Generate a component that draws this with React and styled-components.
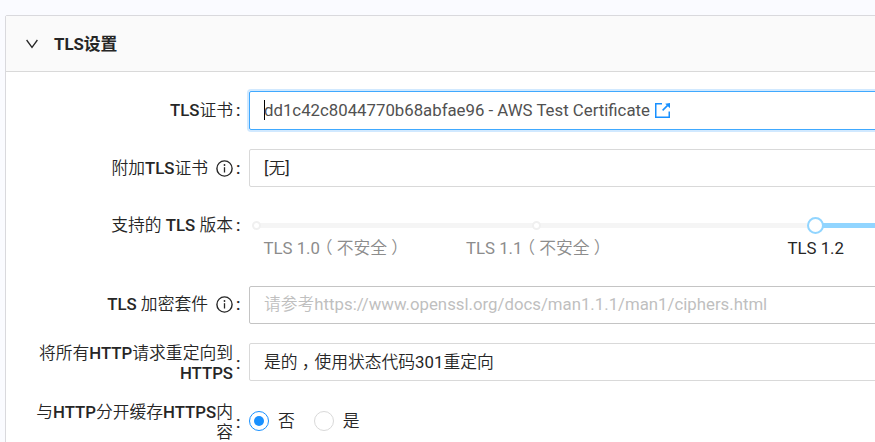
import React from "react";
import styled, { createGlobalStyle, css } from "styled-components";

const GlobalStyle = createGlobalStyle`
  * { box-sizing: border-box; }
  html, body { margin: 0; height: 100%; overflow: hidden; }
  body {
    background: #fafbff;
    color: #262626;
    font-family: Roboto, "Noto Sans CJK SC", sans-serif;
    font-size: 16.8px;
    line-height: 20px;
  }
`;

const Page = styled.main`
  width: 875px;
  height: 442px;
  padding: 15px 0 0 5px;
  overflow: hidden;
`;

const Panel = styled.section`
  width: 1100px;
  height: 600px;
  border: 1px solid #d9d9dd;
  border-radius: 2px;
  background: #fff;
`;

const PanelHeader = styled.header`
  display: flex;
  align-items: center;
  gap: 15px;
  height: 56px;
  padding-left: 19px;
  border-bottom: 1px solid #d9d9d9;
  background: #fafafa;
`;

const PanelTitle = styled.h2`
  margin: 0;
  font-size: 16.8px;
  font-weight: 700;
  line-height: 20px;
`;

const Form = styled.div`
  padding-top: 19px;
`;

const Row = styled.div`
  display: flex;
  align-items: flex-start;
  height: ${(p) => p.$pitch}px;
`;

const Label = styled.label`
  display: flex;
  align-items: center;
  justify-content: flex-end;
  flex: none;
  width: 243px;
  height: ${(p) => p.$height || 38}px;
  padding-right: 8px;
  font-weight: 500;
`;

const LabelText = styled.span`
  width: 202px;
  margin-right: 1px;
  text-align: right;
  display: ${(p) => (p.$inline ? "inline-flex" : "block")};
  align-items: center;
  justify-content: flex-end;
  gap: 8px;
`;

const Cjk = styled.span`
  font-weight: 350;
`;

const Colon = styled.span`
  width: 7px;
  padding-left: 2px;
  font-weight: 500;
`;

const Field = styled.div`
  display: flex;
  align-items: center;
  flex: 1;
  height: 38px;
  padding: 0 0 ${(p) => (p.$raised ? 2 : 0)}px 14px;
  border: 1px solid ${(p) => (p.$strong ? "#c4c4c4" : "#d9d9d9")};
  border-radius: 2px;
  color: ${(p) => (p.$placeholder ? "#bfbfbf" : "#262626")};
  ${(p) =>
    p.$focused &&
    css`
      height: 39px;
      border-color: #40a9ff;
      box-shadow: 0 0 0 2px rgba(24, 144, 255, 0.2);
      color: #515151;
    `}
`;

const Caret = styled.span`
  width: 1px;
  height: 20px;
  margin-right: -1px;
  background: #000;
`;

const Punct = styled.span`
  display: inline-block;
  width: 16.8px;
  text-align: center;
  font-family: "Noto Sans CJK SC", sans-serif;
  font-feature-settings: "halt" 1;
  line-height: 1;
`;

const Slider = styled.div`
  position: relative;
  flex: 1;
  height: 60px;
`;

const Rail = styled.div`
  height: 5px;
  margin: 17px 0 0 8px;
  background: #f5f5f5;
`;

const Track = styled.div`
  height: 5px;
  margin-left: 558px;
  background: #91d5ff;
`;

const Stop = styled.span`
  position: absolute;
  top: ${(p) => (p.$handle ? 11 : 15)}px;
  left: ${(p) => p.$x}px;
  width: ${(p) => (p.$handle ? 17 : 9)}px;
  height: ${(p) => (p.$handle ? 17 : 9)}px;
  border: 2px solid ${(p) => (p.$handle ? "#91d5ff" : "#f0f0f0")};
  border-radius: 50%;
  background: #fff;
`;

const Mark = styled.span`
  position: absolute;
  top: 32px;
  left: ${(p) => p.$x}px;
  white-space: nowrap;
  color: ${(p) => (p.$active ? "#262626" : "#8c8c8c")};
`;

const RadioGroup = styled.div`
  display: flex;
  align-items: center;
  height: 38px;
`;

const RadioOption = styled.label`
  display: flex;
  align-items: center;
  gap: 9px;
  margin-right: 19px;
`;

const RadioDot = styled.span`
  display: grid;
  place-items: center;
  width: 20px;
  height: 20px;
  border: 1px solid ${(p) => (p.$checked ? "#1890ff" : "#d9d9d9")};
  border-radius: 50%;
  &::after {
    content: "";
    width: 10px;
    height: 10px;
    border-radius: 50%;
    background: ${(p) => (p.$checked ? "#1890ff" : "transparent")};
  }
`;

const ExternalIcon = styled.svg`
  margin: 2px 0 0 4px;
`;

const isCjk = /([\u3000-\u9fff\uff00-\uffef]+)/;

function Mixed({ children }) {
  return children
    .split(isCjk)
    .map((part, i) => (i % 2 ? <Cjk key={i}>{part}</Cjk> : part));
}

function InfoIcon() {
  return (
    <svg width="17" height="17" viewBox="0 0 17 17" fill="none" stroke="#262626">
      <circle cx="8.5" cy="8.5" r="7.6" strokeWidth="1.4" />
      <path d="M8.5 7.2v5.3" strokeWidth="1.3" />
      <circle cx="8.5" cy="5" r=".9" fill="#262626" stroke="none" />
    </svg>
  );
}

function FieldLabel({ children, info, height }) {
  return (
    <Label $height={height}>
      <LabelText $inline={info}>
        <span>
          <Mixed>{children}</Mixed>
        </span>
        {info && <InfoIcon />}
      </LabelText>
      <Colon>:</Colon>
    </Label>
  );
}

function InsecureMark({ x, name }) {
  return (
    <Mark $x={x}>
      {name}
      <Cjk>
        <Punct>（</Punct>不安全<Punct>）</Punct>
      </Cjk>
    </Mark>
  );
}

export default function App() {
  return (
    <Page>
      <GlobalStyle />
      <Panel>
        <PanelHeader>
          <svg width="14" height="12" viewBox="0 0 14 12" fill="none" stroke="#262626" strokeWidth="1.3">
            <path d="M1.6 2 7 9.3 12.4 2" />
          </svg>
          <PanelTitle>TLS设置</PanelTitle>
        </PanelHeader>
        <Form>
          <Row $pitch={58}>
            <FieldLabel height={38}>TLS证书</FieldLabel>
            <Field $focused $raised>
              <Caret />
              dd1c42c8044770b68abfae96 - AWS Test Certificate
              <ExternalIcon width="17" height="17" viewBox="0 0 17 17" fill="none" stroke="#1890ff" strokeWidth="1.5">
                <path d="M8 1.75H1.75v13.5h13.5V9.5M8.6 8.4 13.6 3.4" />
                <path d="M11.2 1.8 16 1v5.2Z" fill="#1890ff" stroke="none" />
              </ExternalIcon>
            </Field>
          </Row>
          <Row $pitch={57}>
            <FieldLabel info>附加TLS证书</FieldLabel>
            <Field>
              <span>
                <Mixed>[无]</Mixed>
              </span>
            </Field>
          </Row>
          <Row $pitch={80}>
            <FieldLabel>支持的 TLS 版本</FieldLabel>
            <Slider>
              <Rail>
                <Track />
              </Rail>
              <Stop $x={3} />
              <Stop $x={283} />
              <Stop $x={558} $handle />
              <InsecureMark x={14.5} name="TLS 1.0" />
              <InsecureMark x={217} name="TLS 1.1" />
              <Mark $x={538.5} $active>TLS 1.2</Mark>
            </Slider>
          </Row>
          <Row $pitch={57}>
            <FieldLabel info height={36}>TLS 加密套件</FieldLabel>
            <Field $strong $placeholder $raised>
              <span>
                <Mixed>请参考https://www.openssl.org/docs/man1.1.1/man1/ciphers.html</Mixed>
              </span>
            </Field>
          </Row>
          <Row $pitch={59}>
            <FieldLabel height={39}>将所有HTTP请求重定向到HTTPS</FieldLabel>
            <Field>
              <span>
                <Cjk>
                  是的<Punct>，</Punct>使用状态代码
                </Cjk>
                301<Cjk>重定向</Cjk>
              </span>
            </Field>
          </Row>
          <Row $pitch={40}>
            <FieldLabel height={40}>与HTTP分开缓存HTTPS内容</FieldLabel>
            <RadioGroup>
              <RadioOption>
                <RadioDot $checked />
                <Cjk>否</Cjk>
              </RadioOption>
              <RadioOption>
                <RadioDot />
                <Cjk>是</Cjk>
              </RadioOption>
            </RadioGroup>
          </Row>
        </Form>
      </Panel>
    </Page>
  );
}
